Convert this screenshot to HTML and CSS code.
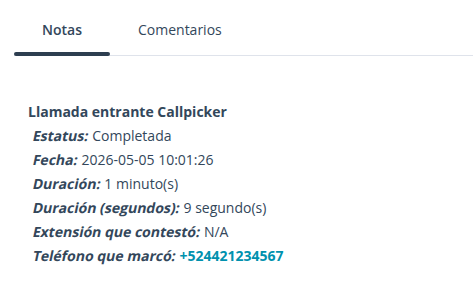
FILE: index.html
```html
<!DOCTYPE html>
<html lang="es">
<head>
<meta charset="utf-8">
<link rel="stylesheet" href="styles.css">
</head>
<body>
  <nav class="tabs">
    <div class="tab active">Notas</div>
    <div class="tab">Comentarios</div>
  </nav>
  <section class="note">
    <div class="title">Llamada entrante Callpicker</div>
    <ul class="fields">
      <li><span class="label">Estatus:</span> Completada</li>
      <li><span class="label">Fecha:</span> 2026-05-05 10:01:26</li>
      <li><span class="label">Duración:</span> 1 minuto(s)</li>
      <li><span class="label">Duración (segundos):</span> 9 segundo(s)</li>
      <li><span class="label">Extensión que contestó:</span> N/A</li>
      <li><span class="label">Teléfono que marcó:</span> <a class="phone" href="#">+524421234567</a></li>
    </ul>
  </section>
</body>
</html>
```

FILE: styles.css
```css
html, body {
  margin: 0;
  padding: 0;
  background: #ffffff;
}
body {
  font-family: "Open Sans", "Liberation Sans", sans-serif;
  font-size: 14px;
  color: #33475b;
}
.tabs {
  display: flex;
  margin-left: 14px;
  height: 55px;
  border-bottom: 1px solid #dfe3eb;
}
.tab {
  position: relative;
  padding: 20px 28px 0;
  line-height: 20px;
  color: #33475b;
}
.tab.active {
  font-weight: 600;
}
.tab.active::after {
  content: "";
  position: absolute;
  left: 0;
  right: 0;
  bottom: -1px;
  height: 4px;
  border-radius: 2px;
  background: #2d3e50;
}
.note {
  padding: 44px 0 0 28px;
}
.title {
  font-weight: 700;
  line-height: 24px;
}
.fields {
  list-style: none;
  margin: 0;
  padding: 0 0 0 5px;
}
.fields li {
  line-height: 24px;
}
.label {
  display: inline-block;
  font-weight: 700;
  transform: skewX(-12deg);
}
.phone {
  color: #0091ae;
  font-weight: 700;
  text-decoration: none;
}
```
